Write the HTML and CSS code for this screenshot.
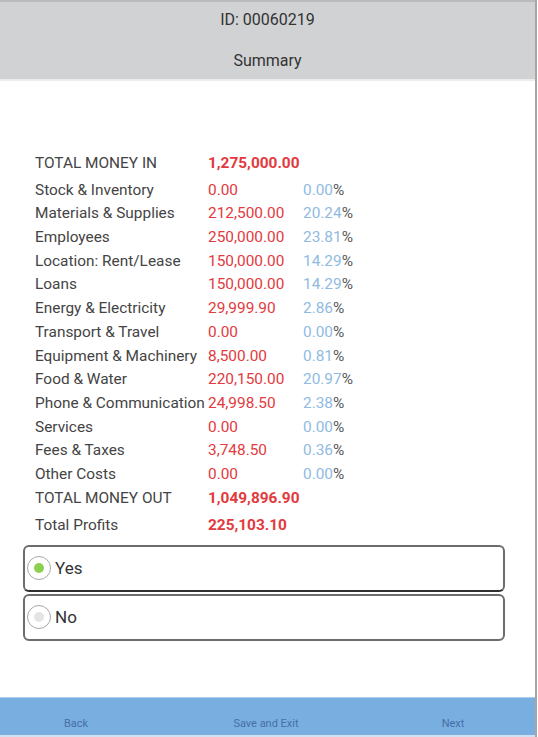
FILE: index.html
```html
<!DOCTYPE html>
<html>
<head>
<meta charset="utf-8">
<link rel="stylesheet" href="styles.css">
</head>
<body>
<div class="page">
  <header class="header">
    <div class="hdr-id">ID: 00060219</div>
    <div class="hdr-title">Summary</div>
  </header>
  <main class="content">
    <div class="table">
      <div class="row total first"><span class="lbl">TOTAL MONEY IN</span><span class="amt bold">1,275,000.00</span><span class="pct"></span></div>
      <div class="row"><span class="lbl">Stock &amp; Inventory</span><span class="amt">0.00</span><span class="pct">0.00<b>%</b></span></div>
      <div class="row"><span class="lbl">Materials &amp; Supplies</span><span class="amt">212,500.00</span><span class="pct">20.24<b>%</b></span></div>
      <div class="row"><span class="lbl">Employees</span><span class="amt">250,000.00</span><span class="pct">23.81<b>%</b></span></div>
      <div class="row"><span class="lbl">Location: Rent/Lease</span><span class="amt">150,000.00</span><span class="pct">14.29<b>%</b></span></div>
      <div class="row"><span class="lbl">Loans</span><span class="amt">150,000.00</span><span class="pct">14.29<b>%</b></span></div>
      <div class="row"><span class="lbl">Energy &amp; Electricity</span><span class="amt">29,999.90</span><span class="pct">2.86<b>%</b></span></div>
      <div class="row"><span class="lbl">Transport &amp; Travel</span><span class="amt">0.00</span><span class="pct">0.00<b>%</b></span></div>
      <div class="row"><span class="lbl">Equipment &amp; Machinery</span><span class="amt">8,500.00</span><span class="pct">0.81<b>%</b></span></div>
      <div class="row"><span class="lbl">Food &amp; Water</span><span class="amt">220,150.00</span><span class="pct">20.97<b>%</b></span></div>
      <div class="row"><span class="lbl">Phone &amp; Communication</span><span class="amt">24,998.50</span><span class="pct">2.38<b>%</b></span></div>
      <div class="row"><span class="lbl">Services</span><span class="amt">0.00</span><span class="pct">0.00<b>%</b></span></div>
      <div class="row"><span class="lbl">Fees &amp; Taxes</span><span class="amt">3,748.50</span><span class="pct">0.36<b>%</b></span></div>
      <div class="row"><span class="lbl">Other Costs</span><span class="amt">0.00</span><span class="pct">0.00<b>%</b></span></div>
      <div class="row total"><span class="lbl">TOTAL MONEY OUT</span><span class="amt bold">1,049,896.90</span><span class="pct"></span></div>
      <div class="row total last"><span class="lbl">Total Profits</span><span class="amt bold">225,103.10</span><span class="pct"></span></div>
    </div>
    <div class="options">
      <label class="option selected"><span class="radio"><span class="dot"></span></span><span class="opt-text">Yes</span></label>
      <label class="option"><span class="radio"><span class="dot"></span></span><span class="opt-text">No</span></label>
    </div>
  </main>
  <footer class="footer">
    <span class="btn back">Back</span>
    <span class="btn save">Save and Exit</span>
    <span class="btn next">Next</span>
  </footer>
</div>
</body>
</html>
```

FILE: styles.css
```css
html, body {
  margin: 0;
  padding: 0;
  background: #ffffff;
}
body {
  font-family: Roboto, "Liberation Sans", Arial, sans-serif;
  color: #444444;
  width: 538px;
  height: 737px;
  overflow: hidden;
}
.page {
  width: 537px;
  height: 737px;
  border-right: 2px solid #a6a6a6;
  display: flex;
  flex-direction: column;
  box-sizing: border-box;
}
.header {
  background: #d1d2d4;
  height: 81px;
  border-top: 2px solid #b9babc;
  border-bottom: 2px solid #ececec;
  box-sizing: border-box;
  display: flex;
  flex-direction: column;
  align-items: center;
  font-size: 16px;
  color: #333;
}
.hdr-id {
  margin-top: 8px;
  line-height: 20px;
}
.hdr-title {
  margin-top: 21px;
  line-height: 20px;
}
.content {
  padding: 71px 0 0 23px;
}
.table {
  padding-left: 12px;
  font-size: 15.4px;
}
.row {
  display: grid;
  grid-template-columns: 173px 95px auto;
  line-height: 23.7px;
  height: 23.7px;
  white-space: nowrap;
}
.row.first {
  margin-bottom: 3px;
}
.row.last {
  margin-top: 3.5px;
}
.amt {
  color: #e23a40;
}
.amt.bold {
  font-weight: 700;
}
.pct {
  color: #8fbbe2;
}
.pct b {
  font-weight: 400;
  color: #555;
}
.options {
  margin-top: 7px;
  width: 482px;
  display: flex;
  flex-direction: column;
  gap: 2px;
}
.option {
  height: 47px;
  border: 2px solid #6d6d6d;
  border-radius: 6px;
  box-sizing: border-box;
  display: flex;
  align-items: center;
  padding-left: 2px;
  font-size: 17px;
  color: #333;
}
.option.selected {
  border-bottom-color: #2f2f2f;
}
.radio {
  width: 24px;
  height: 24px;
  border: 1.5px solid #a8a8a8;
  border-radius: 50%;
  box-sizing: border-box;
  display: flex;
  align-items: center;
  justify-content: center;
  margin-right: 4px;
  background: #fff;
}
.dot {
  width: 10px;
  height: 10px;
  border-radius: 50%;
  background: #e4e4e4;
}
.option.selected .dot {
  background: #8bd14f;
}
.footer {
  margin-top: auto;
  height: 40px;
  background: #79aee0;
  border-top: 1px solid #a9cdee;
  border-bottom: 2px solid #cfe1f2;
  box-sizing: border-box;
  display: grid;
  grid-template-columns: 152px 228px 146px;
  align-items: center;
  font-size: 11px;
  color: #466fa6;
  padding-top: 14px;
}
.btn {
  text-align: center;
}
```
